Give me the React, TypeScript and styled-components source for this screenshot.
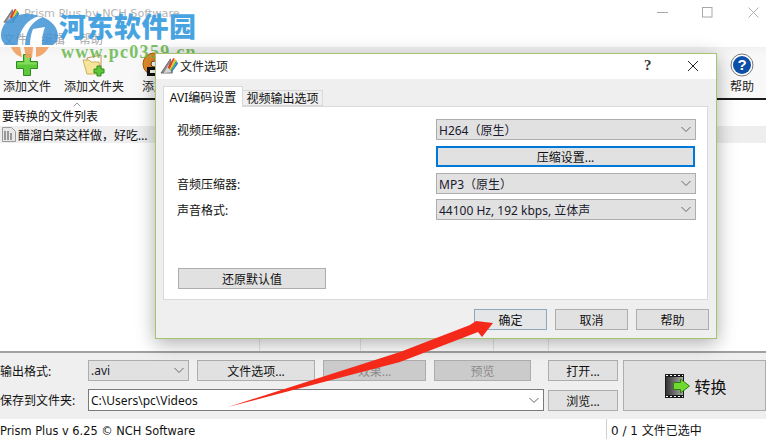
import React from "react";
import styled, { createGlobalStyle } from "styled-components";

const Global = createGlobalStyle`
  html, body { margin: 0; padding: 0; background: #fff; }
  body { font-family: "Noto Sans", "Noto Sans CJK SC", sans-serif; font-size: 12px; color: #111; }
  * { box-sizing: border-box; }
`;
const Win = styled.div`
  position: relative; width: 766px; height: 439px; overflow: hidden; background: #fff;
  display: flex; flex-direction: column;
`;
const TitleBar = styled.div`
  height: 30px; display: flex; align-items: center; padding-left: 3px; gap: 4px; color: #b5b5b5; font-size: 11.2px;
  font-family: "DejaVu Sans", sans-serif;
`;
const Title = styled.span` flex: 1; margin-top: -4px; `;
const WinBtns = styled.div` display: flex; height: 30px; align-items: center; margin: -6px -10px 0 0; `;
const WinBtn = styled.div` width: 45.5px; display: flex; justify-content: center; `;
const HelpMark = styled(WinBtn)` font-family: "Liberation Serif", serif; font-size: 15px; font-weight: 700; color: #333; `;
const MenuBar = styled.div`
  height: 17px; display: flex; gap: 14px; padding-left: 3px; color: #a9a9a9; font-size: 12px; align-items: center;
`;
const Toolbar = styled.div`
  height: 53px; background: linear-gradient(#f2f2f2, #f8f8f8 20%); border-bottom: 2px solid #1a1a1a; position: relative;
  display: flex; align-items: flex-start; padding-top: 3px;
`;
const Tool = styled.div<{ $w: number; $ml?: number }>`
  width: ${p => p.$w}px; margin-left: ${p => p.$ml ?? 0}px; display: flex; flex-direction: column; align-items: center;
  font-size: 12px; line-height: 16px; white-space: nowrap; color: #222;
`;
const IconBox = styled.div` height: 29px; display: flex; align-items: center; justify-content: center; `;
const Spacer = styled.div` flex: 1; `;
const List = styled.div` flex: 1; display: flex; flex-direction: column; background: #fff; `;
const ListHead = styled.div` height: 26px; padding: 9px 0 0 2px; font-size: 12px; line-height: 15px; position: relative; `;
const SortMark = styled.svg` position: absolute; left: 73px; top: 2px; `;
const ListRow = styled.div` height: 17px; background: #eeeeee; display: flex; align-items: center; gap: 2px; padding-left: 2px; font-size: 12px; `;
const ListFill = styled.div` flex: 1; `;
const Cols = styled.div` height: 13px; display: flex; `;
const Col = styled.div<{ $w: number }>` width: ${p => p.$w}px; border-right: 1px solid #e6e6e6; `;
const Panel = styled.div`
  height: 68px; background: #efefef; border-top: 2px solid #a0a0a0; padding: 7px 0 0; display: grid;
  grid-template-columns: 88px 460px 75px 143px; grid-template-rows: 21px 22px; row-gap: 8px; position: relative;
`;
const PanelLabel = styled.div` font-size: 12px; line-height: 23px; white-space: nowrap; overflow: hidden; `;
const RowLine = styled.div` display: flex; gap: 8px; `;
const Btn = styled.div<{ $w?: number; $off?: boolean; $blue?: boolean; $h?: number }>`
  width: ${p => (p.$w ? p.$w + "px" : "100%")}; height: ${p => p.$h ?? 21}px; flex: none;
  display: flex; align-items: center; justify-content: center; white-space: nowrap; font-size: 12px;
  background: ${p => (p.$off ? "#cbcbcb" : "#e1e1e1")}; color: ${p => (p.$off ? "#8b8b8b" : "#111")};
  border: ${p => (p.$blue ? "2px solid #0078d7" : "1px solid #adadad")};
`;
const OkBtn = styled(Btn)` background: #e4e6e8; border-color: #8da7bc; `;
const Combo = styled.div<{ $w?: number }>`
  width: ${p => (p.$w ? p.$w + "px" : "100%")}; height: 21px; background: #e1e1e1; border: 1px solid #adadad;
  display: flex; align-items: center; justify-content: space-between; padding: 0 4px 0 2px; font-size: 12px; color: #1a1a2e;
`;
const PathBox = styled.div`
  width: 456px; height: 22px; background: #fff; border: 1px solid #7a7a7a; display: flex; align-items: center;
  justify-content: space-between; padding: 1px 4px 0 2px; font-size: 12px;
`;
const Side = styled.div` display: flex; flex-direction: column; gap: 9px; grid-row: 1 / span 2; grid-column: 3; padding-right: 5px; `;
const Convert = styled(Btn)`
  grid-row: 1 / span 2; grid-column: 4; height: 51px; gap: 4px; font-size: 16px; padding-left: 3px;
`;
const Status = styled.div` height: 20px; display: flex; align-items: center; font-family: "DejaVu Sans", "Noto Sans CJK SC", sans-serif; `;
const StatusMain = styled.div` width: 606px; font-size: 11.4px; padding-top: 3px; `;
const StatusSide = styled.div` flex: 1; border-left: 1px solid #cfcfcf; height: 20px; padding: 2px 0 0 4px; line-height: 21px; font-size: 12px; `;

const Dialog = styled.div`
  position: absolute; left: 155px; top: 53px; width: 562px; height: 286px; background: #efefef;
  border: 1px solid #a5c46f; box-shadow: 0 4px 18px rgba(0,0,0,.33); display: flex; flex-direction: column;
`;
const DlgTitle = styled.div`
  height: 25px; background: #fff; display: flex; align-items: center; padding: 0 0 2px 4px; gap: 1px; font-size: 12px; color: #222;
`;
const DlgTitleText = styled.span` flex: 1; `;
const DlgBtns = styled.div` display: flex; align-items: center; `;
const Tabs = styled.div` display: flex; align-items: flex-end; height: 27px; padding-left: 7px; `;
const Tab = styled.div<{ $active?: boolean }>`
  width: 80px; height: ${p => (p.$active ? 21 : 16)}px; background: ${p => (p.$active ? "#fff" : "#efefef")};
  border: 1px solid #d9d9d9; border-bottom: ${p => (p.$active ? "none" : "1px solid #d9d9d9")};
  border-left: ${p => (p.$active ? "1px solid #d9d9d9" : "none")};
  display: flex; align-items: center; justify-content: center; font-size: 12px; margin-bottom: ${p => (p.$active ? -1 : 0)}px; position: relative;
`;
const TabPanel = styled.div`
  width: 545px; height: 194px; margin-left: 7px; background: #fff; border: 1px solid #d9d9d9;
  display: flex; flex-direction: column; padding: 12px 0 0 13px;
`;
const FieldRow = styled.div<{ $mb?: number }>`
  display: grid; grid-template-columns: 259px 260px; height: 21px; margin-bottom: ${p => p.$mb ?? 6}px; align-items: center; font-size: 12px;
`;
const Reset = styled(Btn)` margin: 48px 0 0 1px; `;
const DlgFoot = styled.div` display: flex; justify-content: flex-end; gap: 8px; padding: 9px 7px 0 0; `;

const WmTitle = styled.div`
  position: absolute; left: 59px; top: 9px; font-family: "Noto Sans CJK SC", sans-serif; font-weight: 900; font-size: 27px; line-height: 34px;
  color: #3f9fe0; letter-spacing: .5px; white-space: nowrap; opacity: .95;
`;
const WmUrl = styled.div`
  position: absolute; left: 61px; top: 42px; font-family: "Liberation Serif", serif; font-weight: 700; font-size: 18px; line-height: 20px;
  color: #6fbb55; letter-spacing: 1.3px; white-space: nowrap; opacity: .9;
`;
const Overlay = styled.svg` position: absolute; left: 0; top: 0; pointer-events: none; `;

const Chevron = () => (
  <svg width="10" height="7" viewBox="0 0 10 7"><path d="M.5 1 5 5.5 9.5 1" fill="none" stroke="#666" strokeWidth="1" /></svg>
);
const Prism = ({ s = 20 }: { s?: number }) => (
  <svg width={s} height={s} viewBox="0 0 20 20">
    <path d="M1 18 11 3 13 18Z" fill="#8a8a8a" stroke="#555" strokeWidth=".7" />
    <path d="M4 18 9 9 12 17Z" fill="#d5d5d5" />
    <path d="M8 12 14 2 15.5 3 10 14Z" fill="#e23b2e" />
    <path d="M10 14 15.5 3 17 4.5 11 15Z" fill="#f2c81f" />
    <path d="M11 15 17 4.5 18 6 12 16Z" fill="#3cb34a" />
    <path d="M12 16 18 6 19 8 12.5 17Z" fill="#2f6fd8" />
  </svg>
);
const AddFileIcon = () => (
  <svg width="24" height="24" viewBox="0 0 24 24">
    <path d="M8.5 1.5h7v7h7v7h-7v7h-7v-7h-7v-7h7z" fill="#5cc83a" stroke="#2e8b1d" />
    <path d="M9.5 2.5h5v7h7v2h-19v-2h7z" fill="#84dc5c" />
  </svg>
);
const FolderIcon = () => (
  <svg width="24" height="24" viewBox="0 0 24 24">
    <path d="M5 5l14-3v15L7 21z" fill="#fff" stroke="#c98b5a" />
    <path d="M1 7h6l2 2h8l2 12H5z" fill="#f5e59a" stroke="#c9b25a" />
    <path d="M15 13h4v3h3v4h-3v3h-4v-3h-3v-4h3z" fill="#5cc83a" stroke="#2e8b1d" />
  </svg>
);
const DiscIcon = () => (
  <svg width="26" height="26" viewBox="0 0 26 26">
    <circle cx="13" cy="12" r="11" fill="#e08a2a" stroke="#a85a10" />
    <circle cx="13" cy="12" r="3" fill="#fff" stroke="#7a3a08" />
    <rect x="6" y="15" width="11" height="9" fill="#111" />
    <rect x="9" y="18" width="5" height="3" fill="#fff" />
  </svg>
);
const HelpIcon = () => (
  <svg width="24" height="24" viewBox="0 0 24 24">
    <circle cx="12" cy="12" r="11" fill="#fff" stroke="#777" />
    <circle cx="12" cy="12" r="9" fill="#0b4fa8" />
    <text x="12" y="17" textAnchor="middle" fontSize="15" fontWeight="700" fill="#fff" fontFamily="Liberation Sans">?</text>
  </svg>
);
const DocIcon = () => (
  <svg width="14" height="15" viewBox="0 0 14 15">
    <path d="M.5.5h9l4 4v10H.5z" fill="#e8e8e8" stroke="#9a9a9a" />
    <path d="M3 4v9M6 4v9M9 6v7" stroke="#777" strokeWidth="1.4" />
  </svg>
);
const FilmIcon = () => (
  <svg width="25" height="24" viewBox="0 0 25 24">
    <defs>
      <linearGradient id="film" x1="0" x2="1">
        <stop offset="0" stopColor="#333" />
        <stop offset="1" stopColor="#aaa" />
      </linearGradient>
    </defs>
    <rect x="0" y="0" width="19" height="24" fill="#1a1a1a" />
    <rect x="1" y="3" width="17" height="18" fill="url(#film)" />
    <path d="M1 1.5h2M5 1.5h2M9 1.5h2M13 1.5h2M17 1.5h1M1 22.5h2M5 22.5h2M9 22.5h2M13 22.5h2M17 22.5h1" stroke="#fff" />
    <path d="M8.5 8.5h7V5l9 7-9 7v-3.5h-7z" fill="#6fd92f" stroke="#2e7d12" />
  </svg>
);

export default function App() {
  return (
    <Win>
      <Global />
      <TitleBar>
        <Prism s={17} />
        <Title>Prism Plus by NCH Software</Title>
        <WinBtns>
          <WinBtn><svg width="11" height="11"><path d="M0 5.5h11" stroke="#a8a8a8" /></svg></WinBtn>
          <WinBtn><svg width="11" height="11"><rect x=".5" y=".5" width="9.5" height="9.5" fill="none" stroke="#a8a8a8" /></svg></WinBtn>
          <WinBtn><svg width="11" height="11"><path d="M.5.5l10 10M10.5.5l-10 10" stroke="#b0b0b0" /></svg></WinBtn>
        </WinBtns>
      </TitleBar>
      <MenuBar><span>文件</span><span>编辑</span><span>帮助</span></MenuBar>
      <Toolbar>
        <Tool $w={54}><IconBox><AddFileIcon /></IconBox>添加文件</Tool>
        <Tool $w={60} $ml={10}><IconBox><FolderIcon /></IconBox>添加文件夹</Tool>
        <Tool $w={40} $ml={10}><IconBox><DiscIcon /></IconBox>添加</Tool>
        <Spacer />
        <Tool $w={48}><IconBox><HelpIcon /></IconBox>帮助</Tool>
      </Toolbar>
      <List>
        <ListHead>
          要转换的文件列表
          <SortMark width="8" height="5" viewBox="0 0 8 5"><path d="M.5 4.5 4 1l3.5 3.5" fill="none" stroke="#999" /></SortMark>
        </ListHead>
        <ListRow><DocIcon />醋溜白菜这样做，好吃…</ListRow>
        <ListFill />
        <Cols><Col $w={260} /><Col $w={101} /><Col $w={133} /><Col $w={55} /></Cols>
      </List>
      <Panel>
        <PanelLabel>输出格式:</PanelLabel>
        <RowLine>
          <Combo $w={101}>.avi<Chevron /></Combo>
          <Btn $w={118}>文件选项...</Btn>
          <Btn $w={103} $off>效果...</Btn>
          <Btn $w={97} $off>预览</Btn>
        </RowLine>
        <PanelLabel>保存到文件夹:</PanelLabel>
        <PathBox>C:\Users\pc\Videos<Chevron /></PathBox>
        <Side>
          <Btn $w={70}>打开...</Btn>
          <Btn $w={70}>浏览...</Btn>
        </Side>
        <Convert $h={51}><FilmIcon />转换</Convert>
      </Panel>
      <Status>
        <StatusMain>Prism Plus v 6.25 © NCH Software</StatusMain>
        <StatusSide>0 / 1 文件已选中</StatusSide>
      </Status>

      <WmTitle>河东软件园</WmTitle>
      <WmUrl>www.pc0359.cn</WmUrl>
      <Overlay width="70" height="60" viewBox="0 0 70 60">
        <path d="M1 36C1 22 13 13 29 14c4 0 7 1 10 2C28 19 20 28 17 45H6C3 43 1 40 1 36Z" fill="#3f93d6" opacity=".85" />
        <path d="M25 45C26 32 30 22 43 17c9 4 15 11 15 19 0 4-2 7-5 9H42c0-6 1-13 3-18l-12 2c-2 5-3 10-3 16Z" fill="#3f93d6" opacity=".85" />
        <path d="M11 47h9l2 10c-5-1-9-5-11-10Z" fill="#f0a060" opacity=".9" />
        <path d="M24 47h9l-1 11h-6Z" fill="#f0a060" opacity=".9" />
        <path d="M36 47h13c-3 5-7 9-13 10Z" fill="#f0a060" opacity=".9" />
      </Overlay>

      <Dialog>
        <DlgTitle>
          <Prism s={19} />
          <DlgTitleText>文件选项</DlgTitleText>
          <DlgBtns>
            <HelpMark>?</HelpMark>
            <WinBtn><svg width="12" height="12"><path d="M1 1l10 10M11 1L1 11" stroke="#222" /></svg></WinBtn>
          </DlgBtns>
        </DlgTitle>
        <Tabs>
          <Tab $active>AVI编码设置</Tab>
          <Tab>视频输出选项</Tab>
        </Tabs>
        <TabPanel>
          <FieldRow><span>视频压缩器:</span><Combo>H264（原生）<Chevron /></Combo></FieldRow>
          <FieldRow><span /><Btn $w={259} $blue>压缩设置...</Btn></FieldRow>
          <FieldRow $mb={5}><span>音频压缩器:</span><Combo>MP3（原生）<Chevron /></Combo></FieldRow>
          <FieldRow $mb={0}><span>声音格式:</span><Combo>44100 Hz, 192 kbps, 立体声<Chevron /></Combo></FieldRow>
          <Reset $w={148}>还原默认值</Reset>
        </TabPanel>
        <DlgFoot>
          <OkBtn $w={73}>确定</OkBtn>
          <Btn $w={73}>取消</Btn>
          <Btn $w={73}>帮助</Btn>
        </DlgFoot>
      </Dialog>

      <Overlay width="766" height="439" viewBox="0 0 766 439">
        <path d="M228 407 400 352 470 325 476 321 493 323 482 337 478 332 400 362Z" fill="#f5291a" />
      </Overlay>
    </Win>
  );
}
